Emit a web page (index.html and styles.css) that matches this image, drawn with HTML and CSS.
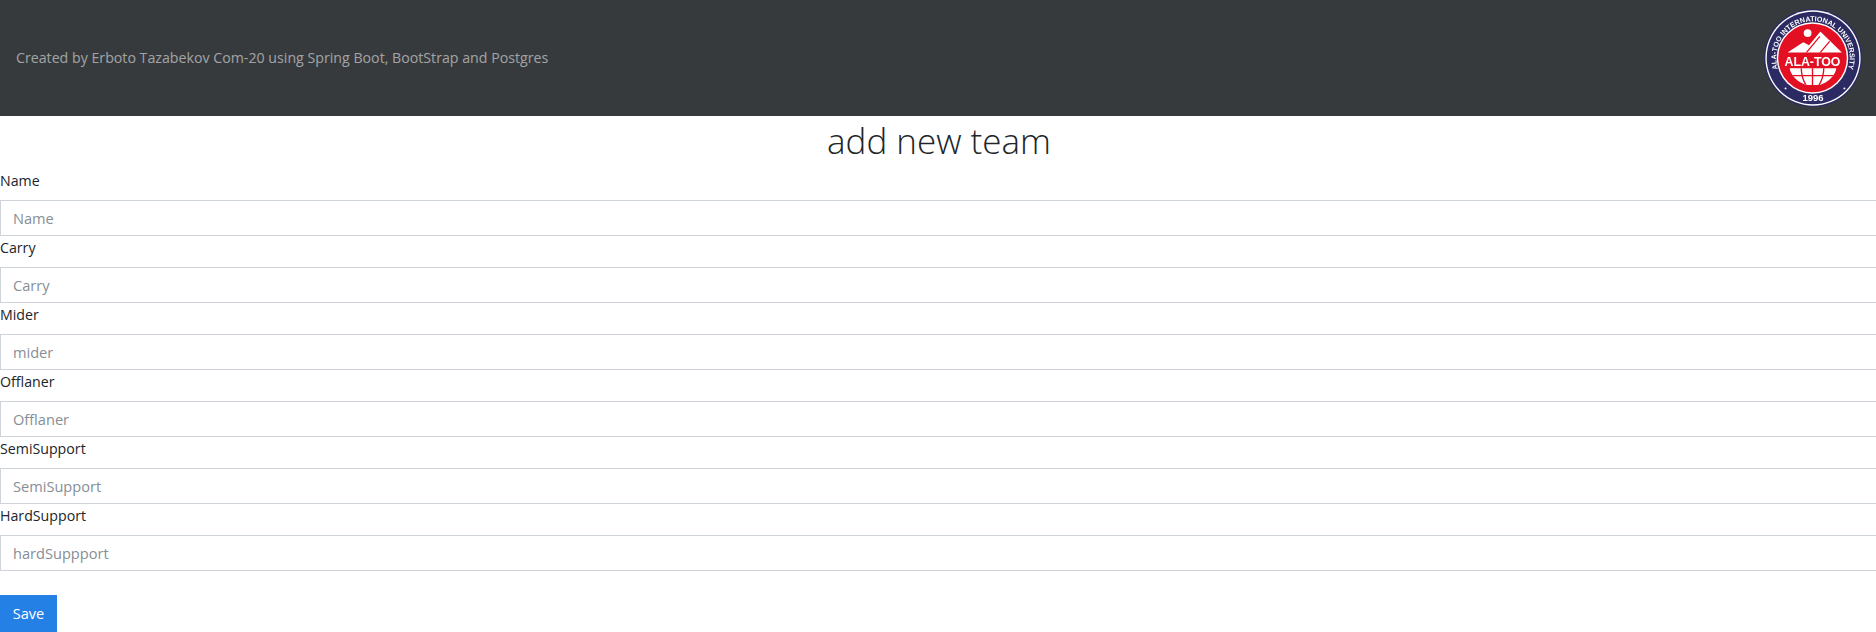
FILE: index.html
```html
<!DOCTYPE html>
<html lang="en">
<head>
<meta charset="utf-8">
<title>add new team</title>
<link rel="stylesheet" href="styles.css">
</head>
<body>
<header class="site-header">
  <p class="credit">Created by Erboto Tazabekov Com-20 using Spring Boot, BootStrap and Postgres</p>
  <svg class="logo" viewBox="0 0 100 100" aria-label="Ala-Too International University logo">
    <defs>
      <path id="arcTop" d="M17.5 68.75 A37.5 37.5 0 1 1 82.5 68.75"/>
      <clipPath id="mountain"><path d="M24 44.5 L40 34 L46 37 L57.5 23 L79.5 44.5Z"/></clipPath>
      <clipPath id="globe"><path d="M26 60.5H74C72 69 65 75 57 77.5H43C35 75 28 69 26 60.5Z"/></clipPath>
    </defs>
    <circle cx="50" cy="50" r="50" fill="#2b2a63"/>
    <circle cx="50" cy="50" r="48.6" fill="#ffffff"/>
    <circle cx="50" cy="50" r="47.2" fill="#2b2a63"/>
    <circle cx="49.5" cy="50" r="36.5" fill="#ffffff"/>
    <circle cx="49.5" cy="50" r="35" fill="#e30f22"/>
    <text class="logo-ring"><textPath href="#arcTop" startOffset="50%" text-anchor="middle">ALA-TOO INTERNATIONAL UNIVERSITY</textPath></text>
    <text class="logo-year" x="50" y="94" text-anchor="middle">1996</text>
    <circle cx="22" cy="81" r="1" fill="#ffffff"/>
    <circle cx="82" cy="81" r="1" fill="#ffffff"/>
    <circle cx="44.5" cy="24.6" r="4" fill="#ffffff"/>
    <g clip-path="url(#mountain)">
      <rect x="20" y="20" width="62" height="26" fill="#ffffff"/>
      <path d="M42 46 L57 28 M56 46 L67 33" stroke="#e30f22" stroke-width="1.3" fill="none"/>
    </g>
    <text class="logo-name" x="49.5" y="58" text-anchor="middle">ALA-TOO</text>
    <g clip-path="url(#globe)">
      <rect x="24" y="60" width="52" height="19" fill="#ffffff"/>
      <path d="M49.5 60V78M38 60C38 66 40 73 43 78M61 60C61 66 59 73 56 78M24 68H76" stroke="#e30f22" stroke-width="1.4" fill="none"/>
    </g>
  </svg>
</header>
<main>
  <h1 class="page-title">add new team</h1>
  <form class="team-form">
    <div class="field"><label class="field-label" for="name">Name</label><input class="field-input" id="name" placeholder="Name"></div>
    <div class="field"><label class="field-label" for="carry">Carry</label><input class="field-input" id="carry" placeholder="Carry"></div>
    <div class="field"><label class="field-label" for="mider">Mider</label><input class="field-input" id="mider" placeholder="mider"></div>
    <div class="field"><label class="field-label" for="offlaner">Offlaner</label><input class="field-input" id="offlaner" placeholder="Offlaner"></div>
    <div class="field"><label class="field-label" for="semi">SemiSupport</label><input class="field-input" id="semi" placeholder="SemiSupport"></div>
    <div class="field"><label class="field-label" for="hard">HardSupport</label><input class="field-input" id="hard" placeholder="hardSuppport"></div>
    <button class="save-button" type="button">Save</button>
  </form>
</main>
</body>
</html>
```
FILE: styles.css
```css
* { box-sizing: border-box; }

html, body {
  margin: 0;
  padding: 0;
  background: #ffffff;
}

body {
  font-family: "Open Sans", "Noto Sans", "Liberation Sans", sans-serif;
  font-size: 14px;
  line-height: 24px;
  color: #212529;
  overflow: hidden;
}

.site-header {
  height: 116px;
  background: #373a3d;
  display: flex;
  align-items: center;
  justify-content: space-between;
  padding: 0 14px 0 16px;
}

.credit {
  margin: 0;
  font-size: 14.2px;
  color: rgba(255, 255, 255, 0.55);
}

.logo {
  width: 98px;
  height: 98px;
  flex: none;
  filter: blur(0.4px);
}

.logo-ring {
  font-family: "Liberation Sans", sans-serif;
  font-size: 7.3px;
  font-weight: 700;
  fill: #ffffff;
}

.logo-year {
  font-family: "Liberation Sans", sans-serif;
  font-size: 9.7px;
  font-weight: 700;
  fill: #ffffff;
}

.logo-name {
  font-family: "Liberation Sans", sans-serif;
  font-size: 12.6px;
  font-weight: 700;
  fill: #ffffff;
}

.page-title {
  margin: 0;
  height: 53px;
  font-size: 35px;
  line-height: 49px;
  font-weight: 300;
  text-align: center;
  padding-left: 2px;
}

.team-form {
  display: flex;
  flex-direction: column;
  align-items: flex-start;
}

.field {
  width: 100%;
  display: flex;
  flex-direction: column;
  gap: 7px;
}

.field-label {
  height: 24px;
  font-size: 14.2px;
}

.field-input {
  display: block;
  width: calc(100% + 20px);
  flex: none;
  height: 36px;
  padding: 0 12px;
  border: 1px solid #ced4da;
  background: #ffffff;
  font: inherit;
  font-size: 14.6px;
  color: #495057;
  outline: none;
}

.field-input::placeholder {
  color: #868e96;
  opacity: 1;
}

.save-button {
  margin-top: 24px;
  width: 57px;
  height: 38px;
  border: 0;
  padding: 0 0 2px;
  background: #2580e6;
  color: #ffffff;
  font: inherit;
  font-size: 14.6px;
}
```
